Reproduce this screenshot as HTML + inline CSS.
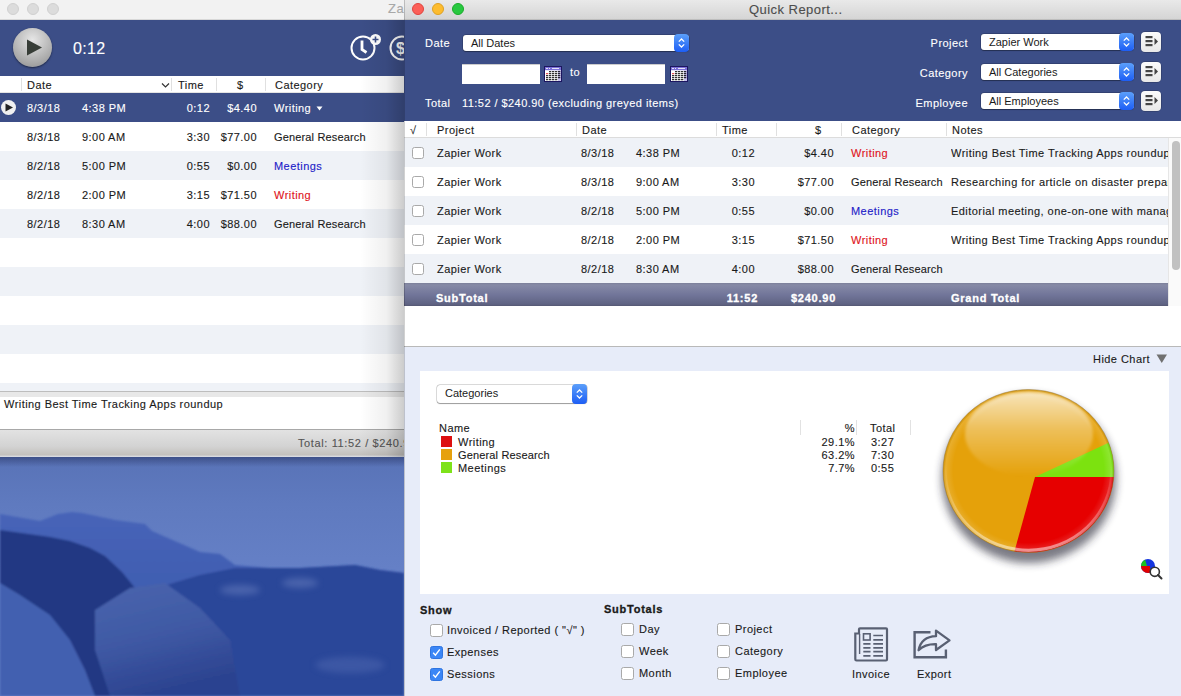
<!DOCTYPE html>
<html><head><meta charset="utf-8">
<style>
*{margin:0;padding:0;box-sizing:border-box}
html,body{width:1181px;height:696px;overflow:hidden;background:#3f5aa8}
body{position:relative;font-family:"Liberation Sans",sans-serif;font-size:11px;color:#1a1a1a}
.a{position:absolute}
.t{position:absolute;white-space:pre;line-height:14px;font-size:11px;letter-spacing:.45px;-webkit-text-stroke:.12px currentColor}
#desk{position:absolute;left:0;top:440px;width:404px;height:256px}
#lw{position:absolute;left:0;top:0;width:404px;height:457px;overflow:hidden;background:#fff}
#rw{position:absolute;left:404px;top:0;width:777px;height:696px;overflow:hidden;background:#fff}
.tl{position:absolute;top:3px;width:12px;height:12px;border-radius:50%}
.hdr{background:#3c4e87}
.wt{color:#fff}
.row{position:absolute;left:0;height:29px}
.alt{background:#eff2f7}
.cb{position:absolute;width:12px;height:12px;border:1px solid #a9a9a9;border-radius:2.5px;background:#fff}
.red{color:#e0131b}
.blue{color:#1c21c8}
.b{font-weight:bold;letter-spacing:.75px!important;-webkit-text-stroke:.3px currentColor!important}
.vd{position:absolute;top:123px;width:1px;height:13px;background:#e0e0e0}
.pop{background:#fff;border-radius:3px;box-shadow:0 0 0 .5px rgba(0,0,0,.25),0 .5px 1px rgba(0,0,0,.3)}
.pop span{position:absolute;left:8px;top:1px;line-height:14px;white-space:pre}
.pop i{position:absolute;right:0;top:-1px;bottom:-1px;width:15px;border-radius:4px;background:linear-gradient(#5b9ffa,#1d5ef5)}
.fld{background:#fff;box-shadow:inset 0 1px 0 #ccc}
.cal{width:18px;height:16px;background:#fff}
.sbtn{width:20px;height:20px;border-radius:4px;background:linear-gradient(#fbfbfb,#e8e8e8);box-shadow:0 0 0 .5px rgba(0,0,0,.3)}
.chk{background:#3b86f6!important;border-color:#2f74e0!important}
</style></head><body>

<!-- desktop -->
<svg id="desk" width="404" height="256" viewBox="0 440 404 256">
 <defs>
  <linearGradient id="sky" x1="0" y1="0" x2="0" y2="1">
   <stop offset="0" stop-color="#5670b4"/><stop offset=".25" stop-color="#5f7abf"/><stop offset=".5" stop-color="#6580c6"/><stop offset="1" stop-color="#6883ca"/>
  </linearGradient>
  <linearGradient id="far" x1="0" y1="0" x2="0" y2="1">
   <stop offset="0" stop-color="#4764b8"/><stop offset="1" stop-color="#3754a8"/>
  </linearGradient>
  <linearGradient id="rock" x1="0" y1="0" x2=".3" y2="1"><stop offset="0" stop-color="#4a65ae"/><stop offset=".55" stop-color="#3f59a4"/><stop offset="1" stop-color="#2c4390"/></linearGradient>
  <filter id="bl"><feGaussianBlur stdDeviation="0.8"/></filter>
  <filter id="bl2"><feGaussianBlur stdDeviation="3"/></filter>
 </defs>
 <rect x="0" y="440" width="404" height="256" fill="url(#sky)"/>
 <g filter="url(#bl)">
 <path d="M0 514 L40 521 L58 514 L72 512 L82 513 L115 520 L145 524 L152 531 L200 552 L220 554 L235 565 L270 568 L300 568 L355 565 L380 570 L404 573 L404 696 L0 696Z" fill="url(#far)"/>
 <path d="M150 590 L200 575 L235 568 L270 568 L300 568 L355 565 L380 570 L404 573 L404 696 L150 696Z" fill="#2b4699"/>
 <path d="M0 530 L50 537 L70 541 L90 548 L105 556 L122 572 L135 588 L160 630 L190 696 L0 696Z" fill="#213883"/>
 <path d="M95 610 L130 588 L165 583 L200 608 L230 640 L240 696 L110 696 L95 650Z" fill="url(#rock)"/>
 <path d="M0 583 L20 595 L50 615 L70 640 L85 670 L95 696 L0 696Z" fill="#4361b0"/>
 </g>
 <g filter="url(#bl2)" opacity=".5">
  <ellipse cx="240" cy="590" rx="20" ry="5" fill="#6a80c0"/>
  <ellipse cx="300" cy="583" rx="18" ry="5" fill="#6a80c0"/>
  <ellipse cx="350" cy="665" rx="35" ry="8" fill="#5068b0"/>
  
 </g>
</svg>


<div class="a" style="left:0;top:457px;width:404px;height:10px;background:linear-gradient(rgba(0,0,30,.3),rgba(0,0,30,0))"></div>
<!-- LEFT WINDOW -->
<div id="lw">
 <div class="a" style="left:0;top:0;width:404px;height:20px;background:#f2f2f2;border-bottom:1px solid #d8d8d8"></div>
 <div class="tl" style="left:7px;background:#dcdcdc;border:1px solid #d0d0d0"></div>
 <div class="tl" style="left:27px;background:#dcdcdc;border:1px solid #d0d0d0"></div>
 <div class="tl" style="left:47px;background:#dcdcdc;border:1px solid #d0d0d0"></div>
 <div class="t" style="left:388px;top:2px;font-size:13px;color:#a8a8a8">Zap</div>

 <div class="a hdr" style="left:0;top:20px;width:404px;height:56px"></div>
 <!-- play button -->
 <div class="a" style="left:13px;top:28px;width:39px;height:39px;border-radius:50%;background:radial-gradient(circle at 50% 30%,#e6e6e6,#a8a8a8 70%,#8a8a8a);box-shadow:0 1px 2px rgba(0,0,0,.5)"></div>
 <svg class="a" style="left:26px;top:38px" width="18" height="19"><path d="M1 1.5 L16 9.5 L1 17.5Z" fill="#373d37"/></svg>
 <div class="t wt" style="left:73px;top:41px;font-size:16px;line-height:16px;letter-spacing:.3px">0:12</div>
 <!-- clock icon -->
 <svg class="a" style="left:345px;top:30px" width="60" height="36">
  <circle cx="18" cy="18" r="11.5" fill="none" stroke="#fff" stroke-width="2"/>
  <path d="M17 10.5 V19.5 L21.5 22.5" fill="none" stroke="#fff" stroke-width="2.8"/>
  <circle cx="30.5" cy="9.5" r="5.5" fill="#fff"/>
  <path d="M30.5 6.5 V12.5 M27.5 9.5 H33.5" stroke="#3c4e87" stroke-width="1.6"/>
  <circle cx="57" cy="18" r="11.5" fill="none" stroke="#fff" stroke-width="2"/>
  <text x="51" y="24" font-family="Liberation Sans" font-weight="bold" font-size="16" fill="#fff">$</text>
 </svg>

 <!-- table header -->
 <div class="a" style="left:0;top:76px;width:404px;height:17px;background:#fff;border-bottom:1px solid #e4e4e4"></div>
 <div class="a" style="left:21px;top:78px;width:1px;height:13px;background:#e0e0e0"></div>
 <div class="a" style="left:171px;top:78px;width:1px;height:13px;background:#e0e0e0"></div>
 <div class="a" style="left:216px;top:78px;width:1px;height:13px;background:#e0e0e0"></div>
 <div class="a" style="left:265px;top:78px;width:1px;height:13px;background:#e0e0e0"></div>
 <div class="t" style="left:27px;top:78px">Date</div>
 <svg class="a" style="left:161px;top:82px" width="9" height="7"><path d="M1 1.5 L4.5 5 L8 1.5" fill="none" stroke="#333" stroke-width="1.2"/></svg>
 <div class="t" style="left:178px;top:78px">Time</div>
 <div class="t" style="left:237px;top:78px">$</div>
 <div class="t" style="left:275px;top:78px">Category</div>

 <!-- rows -->
 <div class="row hdr" style="top:93px;width:404px"></div>
 <div class="row" style="top:122px;width:404px;background:#fff"></div>
 <div class="row alt" style="top:151px;width:404px"></div>
 <div class="row" style="top:180px;width:404px;background:#fff"></div>
 <div class="row alt" style="top:209px;width:404px"></div>
 <div class="row" style="top:238px;width:404px;background:#fff"></div>
 <div class="row alt" style="top:267px;width:404px"></div>
 <div class="row" style="top:296px;width:404px;background:#fff"></div>
 <div class="row alt" style="top:325px;width:404px"></div>
 <div class="row" style="top:354px;width:404px;background:#fff"></div>
 <div class="row alt" style="top:383px;width:404px;height:8px"></div>

 <!-- row play -->
 <div class="a" style="left:1px;top:100px;width:15px;height:15px;border-radius:50%;background:#f0f0f0"></div>
 <svg class="a" style="left:5px;top:103px" width="9" height="9"><path d="M0.5 0.5 L8 4.5 L0.5 8.5Z" fill="#222"/></svg>

 <div class="t wt" style="left:27px;top:101px">8/3/18</div>
 <div class="t wt" style="left:82px;top:101px">4:38 PM</div>
 <div class="t wt" style="right:194px;top:101px">0:12</div>
 <div class="t wt" style="right:147px;top:101px">$4.40</div>
 <div class="t wt" style="left:274px;top:101px">Writing</div><svg class="a" style="left:316px;top:106px" width="7" height="5"><path d="M0.5 0.5 H6.5 L3.5 4.5Z" fill="#fff"/></svg>
 <div class="t" style="left:27px;top:130px">8/3/18</div>
 <div class="t" style="left:82px;top:130px">9:00 AM</div>
 <div class="t" style="right:194px;top:130px">3:30</div>
 <div class="t" style="right:147px;top:130px">$77.00</div>
 <div class="t" style="left:274px;top:130px;letter-spacing:.15px">General Research</div>
 <div class="t" style="left:27px;top:159px">8/2/18</div>
 <div class="t" style="left:82px;top:159px">5:00 PM</div>
 <div class="t" style="right:194px;top:159px">0:55</div>
 <div class="t" style="right:147px;top:159px">$0.00</div>
 <div class="t blue" style="left:274px;top:159px">Meetings</div>
 <div class="t" style="left:27px;top:188px">8/2/18</div>
 <div class="t" style="left:82px;top:188px">2:00 PM</div>
 <div class="t" style="right:194px;top:188px">3:15</div>
 <div class="t" style="right:147px;top:188px">$71.50</div>
 <div class="t red" style="left:274px;top:188px">Writing</div>
 <div class="t" style="left:27px;top:217px">8/2/18</div>
 <div class="t" style="left:82px;top:217px">8:30 AM</div>
 <div class="t" style="right:194px;top:217px">4:00</div>
 <div class="t" style="right:147px;top:217px">$88.00</div>
 <div class="t" style="left:274px;top:217px;letter-spacing:.15px">General Research</div>

 <!-- notes -->
 <div class="a" style="left:0;top:391px;width:404px;height:1px;background:#bdbdbd"></div>
 <div class="a" style="left:0;top:392px;width:404px;height:5px;background:#e8e8e8"></div>
 <div class="a" style="left:0;top:397px;width:404px;height:32px;background:#fff"></div>
 <div class="t" style="left:4px;top:397px">Writing Best Time Tracking Apps roundup</div>
 <div class="a" style="left:0;top:429px;width:404px;height:1px;background:#a8a8a8"></div>
 <div class="a" style="left:0;top:430px;width:404px;height:27px;background:linear-gradient(#e2e2e2,#d3d3d3 60%,#c4c1bd 92%,#dfe2ea)"></div>
 <div class="t" style="left:298px;top:436px;color:#555;letter-spacing:.62px">Total: 11:52 / $240.90</div>
 <!-- shadow from right window -->
 <div class="a" style="left:360px;top:20px;width:44px;height:437px;background:linear-gradient(90deg,rgba(0,0,0,0),rgba(0,0,0,.06) 60%,rgba(0,0,0,.2))"></div>
</div>

<!-- RIGHT WINDOW -->
<div id="rw">
 <div class="a" style="left:0;top:0;width:777px;height:20px;background:linear-gradient(#e9e9e9,#d5d5d5);border-bottom:1px solid #bdbdbd"></div>
 <div class="tl" style="left:8px;top:2.5px;background:#fc5f57;border:1px solid #e0443e"></div>
 <div class="tl" style="left:28px;top:2.5px;background:#fdbc2e;border:1px solid #dea123"></div>
 <div class="tl" style="left:48px;top:2.5px;background:#28c840;border:1px solid #1aab29"></div>
 <div class="t" style="left:345px;top:2px;font-size:13px;line-height:15px;color:#4d4d4d">Quick Report...</div>

 <div class="a hdr" style="left:0;top:20px;width:777px;height:101px"></div>
 <div class="t wt" style="left:21px;top:36px">Date</div>
 <div class="a pop" style="left:59px;top:35px;width:226px;height:16px"><span>All Dates</span><i><svg width="15" height="16" viewBox="0 0 15 16" style="position:absolute;left:0;top:50%;margin-top:-8px"><path d="M4.8 6.6 L7.5 4 L10.2 6.6 M4.8 9.4 L7.5 12 L10.2 9.4" fill="none" stroke="#fff" stroke-width="1.3"/></svg></i></div>
 <div class="a fld" style="left:58px;top:64px;width:78px;height:20px"></div>
 <div class="a cal" style="left:140px;top:66px"><svg width="18" height="16" viewBox="0 0 18 16"><rect x="0.5" y="0.5" width="17" height="15" fill="#fff" stroke="#1c1660"/><rect x="1" y="1" width="16" height="3.2" fill="#7b6fd8"/><path d="M2 2.5 H4 M5 2.5 H6 M8 2.5 H15" stroke="#fff" stroke-width=".8"/><rect x="14" y="4.2" width="3" height="10.8" fill="#c8c0f0"/><rect x="5" y="5.2" width="2.3" height="1" fill="#000"/><rect x="8" y="5.2" width="2.3" height="1" fill="#000"/><rect x="11" y="5.2" width="2.3" height="1" fill="#000"/><rect x="14" y="5.2" width="2.3" height="1" fill="#000"/><rect x="2" y="7.2" width="2.3" height="1" fill="#e03030"/><rect x="5" y="7.2" width="2.3" height="1" fill="#000"/><rect x="8" y="7.2" width="2.3" height="1" fill="#000"/><rect x="11" y="7.2" width="2.3" height="1" fill="#000"/><rect x="14" y="7.2" width="2.3" height="1" fill="#000"/><rect x="2" y="9.2" width="2.3" height="1" fill="#000"/><rect x="5" y="9.2" width="2.3" height="1" fill="#000"/><rect x="8" y="9.2" width="2.3" height="1" fill="#000"/><rect x="11" y="9.2" width="2.3" height="1" fill="#000"/><rect x="14" y="9.2" width="2.3" height="1" fill="#000"/><rect x="2" y="11.2" width="2.3" height="1" fill="#000"/><rect x="5" y="11.2" width="2.3" height="1" fill="#000"/><rect x="8" y="11.2" width="2.3" height="1" fill="#000"/><rect x="11" y="11.2" width="2.3" height="1" fill="#000"/><rect x="14" y="11.2" width="2.3" height="1" fill="#000"/><rect x="2" y="13.2" width="2.3" height="1" fill="#000"/><rect x="5" y="13.2" width="2.3" height="1" fill="#000"/><rect x="8" y="13.2" width="2.3" height="1" fill="#000"/><rect x="11" y="13.2" width="2.3" height="1" fill="#000"/></svg></div>
 <div class="t wt" style="left:166px;top:65px">to</div>
 <div class="a fld" style="left:183px;top:64px;width:78px;height:20px"></div>
 <div class="a cal" style="left:266px;top:66px"><svg width="18" height="16" viewBox="0 0 18 16"><rect x="0.5" y="0.5" width="17" height="15" fill="#fff" stroke="#1c1660"/><rect x="1" y="1" width="16" height="3.2" fill="#7b6fd8"/><path d="M2 2.5 H4 M5 2.5 H6 M8 2.5 H15" stroke="#fff" stroke-width=".8"/><rect x="14" y="4.2" width="3" height="10.8" fill="#c8c0f0"/><rect x="5" y="5.2" width="2.3" height="1" fill="#000"/><rect x="8" y="5.2" width="2.3" height="1" fill="#000"/><rect x="11" y="5.2" width="2.3" height="1" fill="#000"/><rect x="14" y="5.2" width="2.3" height="1" fill="#000"/><rect x="2" y="7.2" width="2.3" height="1" fill="#e03030"/><rect x="5" y="7.2" width="2.3" height="1" fill="#000"/><rect x="8" y="7.2" width="2.3" height="1" fill="#000"/><rect x="11" y="7.2" width="2.3" height="1" fill="#000"/><rect x="14" y="7.2" width="2.3" height="1" fill="#000"/><rect x="2" y="9.2" width="2.3" height="1" fill="#000"/><rect x="5" y="9.2" width="2.3" height="1" fill="#000"/><rect x="8" y="9.2" width="2.3" height="1" fill="#000"/><rect x="11" y="9.2" width="2.3" height="1" fill="#000"/><rect x="14" y="9.2" width="2.3" height="1" fill="#000"/><rect x="2" y="11.2" width="2.3" height="1" fill="#000"/><rect x="5" y="11.2" width="2.3" height="1" fill="#000"/><rect x="8" y="11.2" width="2.3" height="1" fill="#000"/><rect x="11" y="11.2" width="2.3" height="1" fill="#000"/><rect x="14" y="11.2" width="2.3" height="1" fill="#000"/><rect x="2" y="13.2" width="2.3" height="1" fill="#000"/><rect x="5" y="13.2" width="2.3" height="1" fill="#000"/><rect x="8" y="13.2" width="2.3" height="1" fill="#000"/><rect x="11" y="13.2" width="2.3" height="1" fill="#000"/></svg></div>
 <div class="t wt" style="left:21px;top:96px">Total</div>
 <div class="t wt" style="left:58px;top:96px">11:52 / $240.90 (excluding greyed items)</div>

 <div class="t wt" style="right:213px;top:36px">Project</div>
 <div class="t wt" style="right:213px;top:66px">Category</div>
 <div class="t wt" style="right:213px;top:96px">Employee</div>
 <div class="a pop" style="left:577px;top:34px;width:153px;height:16px"><span>Zapier Work</span><i><svg width="15" height="16" viewBox="0 0 15 16" style="position:absolute;left:0;top:50%;margin-top:-8px"><path d="M4.8 6.6 L7.5 4 L10.2 6.6 M4.8 9.4 L7.5 12 L10.2 9.4" fill="none" stroke="#fff" stroke-width="1.3"/></svg></i></div>
 <div class="a pop" style="left:577px;top:64px;width:153px;height:16px"><span>All Categories</span><i><svg width="15" height="16" viewBox="0 0 15 16" style="position:absolute;left:0;top:50%;margin-top:-8px"><path d="M4.8 6.6 L7.5 4 L10.2 6.6 M4.8 9.4 L7.5 12 L10.2 9.4" fill="none" stroke="#fff" stroke-width="1.3"/></svg></i></div>
 <div class="a pop" style="left:577px;top:93px;width:153px;height:16px"><span>All Employees</span><i><svg width="15" height="16" viewBox="0 0 15 16" style="position:absolute;left:0;top:50%;margin-top:-8px"><path d="M4.8 6.6 L7.5 4 L10.2 6.6 M4.8 9.4 L7.5 12 L10.2 9.4" fill="none" stroke="#fff" stroke-width="1.3"/></svg></i></div>
 <div class="a sbtn" style="left:737px;top:32px"><svg width="20" height="20" viewBox="0 0 20 20"><rect x="4.5" y="4" width="7" height="2.2" fill="#444"/><rect x="4.5" y="8" width="7" height="2.2" fill="#444"/><rect x="4.5" y="12" width="7" height="2.2" fill="#444"/><path d="M13.5 6 L17 9.5 L13.5 13Z" fill="#444"/></svg></div>
 <div class="a sbtn" style="left:737px;top:62px"><svg width="20" height="20" viewBox="0 0 20 20"><rect x="4.5" y="4" width="7" height="2.2" fill="#444"/><rect x="4.5" y="8" width="7" height="2.2" fill="#444"/><rect x="4.5" y="12" width="7" height="2.2" fill="#444"/><path d="M13.5 6 L17 9.5 L13.5 13Z" fill="#444"/></svg></div>
 <div class="a sbtn" style="left:737px;top:91px"><svg width="20" height="20" viewBox="0 0 20 20"><rect x="4.5" y="4" width="7" height="2.2" fill="#444"/><rect x="4.5" y="8" width="7" height="2.2" fill="#444"/><rect x="4.5" y="12" width="7" height="2.2" fill="#444"/><path d="M13.5 6 L17 9.5 L13.5 13Z" fill="#444"/></svg></div>

 <!-- table header -->
 <div class="a" style="left:0;top:121px;width:777px;height:17px;background:#fff;border-bottom:1px solid #dcdcdc"></div>
 <div class="t" style="left:6px;top:123px">√</div>
 <div class="a vd" style="left:22px"></div>
 <div class="t" style="left:33px;top:123px">Project</div>
 <div class="a vd" style="left:172px"></div>
 <div class="t" style="left:178px;top:123px">Date</div>
 <div class="a vd" style="left:312px"></div>
 <div class="t" style="left:318px;top:123px">Time</div>
 <div class="a vd" style="left:372px"></div>
 <div class="t" style="left:411px;top:123px">$</div>
 <div class="a vd" style="left:437px"></div>
 <div class="t" style="left:448px;top:123px">Category</div>
 <div class="a vd" style="left:542px"></div>
 <div class="t" style="left:548px;top:123px">Notes</div>

 <div class="row alt" style="top:138px;width:777px"></div>
 <div class="row" style="top:167px;width:777px;background:#fff"></div>
 <div class="row alt" style="top:196px;width:777px"></div>
 <div class="row" style="top:225px;width:777px;background:#fff"></div>
 <div class="row alt" style="top:254px;width:777px"></div>
 <div class="cb" style="left:8px;top:147px"></div>
 <div class="t" style="left:33px;top:146px">Zapier Work</div>
 <div class="t" style="left:177px;top:146px">8/3/18</div>
 <div class="t" style="left:232px;top:146px">4:38 PM</div>
 <div class="t" style="right:426px;top:146px">0:12</div>
 <div class="t" style="right:347px;top:146px">$4.40</div>
 <div class="t red" style="left:447px;top:146px">Writing</div>
 <div class="t" style="left:547px;top:146px;width:221px;overflow:hidden">Writing Best Time Tracking Apps roundup</div>
 <div class="cb" style="left:8px;top:176px"></div>
 <div class="t" style="left:33px;top:175px">Zapier Work</div>
 <div class="t" style="left:177px;top:175px">8/3/18</div>
 <div class="t" style="left:232px;top:175px">9:00 AM</div>
 <div class="t" style="right:426px;top:175px">3:30</div>
 <div class="t" style="right:347px;top:175px">$77.00</div>
 <div class="t" style="left:447px;top:175px;letter-spacing:.15px">General Research</div>
 <div class="t" style="left:547px;top:175px;width:221px;overflow:hidden">Researching for article on disaster preparedness</div>
 <div class="cb" style="left:8px;top:205px"></div>
 <div class="t" style="left:33px;top:204px">Zapier Work</div>
 <div class="t" style="left:177px;top:204px">8/2/18</div>
 <div class="t" style="left:232px;top:204px">5:00 PM</div>
 <div class="t" style="right:426px;top:204px">0:55</div>
 <div class="t" style="right:347px;top:204px">$0.00</div>
 <div class="t blue" style="left:447px;top:204px">Meetings</div>
 <div class="t" style="left:547px;top:204px;width:221px;overflow:hidden">Editorial meeting, one-on-one with manager</div>
 <div class="cb" style="left:8px;top:234px"></div>
 <div class="t" style="left:33px;top:233px">Zapier Work</div>
 <div class="t" style="left:177px;top:233px">8/2/18</div>
 <div class="t" style="left:232px;top:233px">2:00 PM</div>
 <div class="t" style="right:426px;top:233px">3:15</div>
 <div class="t" style="right:347px;top:233px">$71.50</div>
 <div class="t red" style="left:447px;top:233px">Writing</div>
 <div class="t" style="left:547px;top:233px;width:221px;overflow:hidden">Writing Best Time Tracking Apps roundup</div>
 <div class="cb" style="left:8px;top:263px"></div>
 <div class="t" style="left:33px;top:262px">Zapier Work</div>
 <div class="t" style="left:177px;top:262px">8/2/18</div>
 <div class="t" style="left:232px;top:262px">8:30 AM</div>
 <div class="t" style="right:426px;top:262px">4:00</div>
 <div class="t" style="right:347px;top:262px">$88.00</div>
 <div class="t" style="left:447px;top:262px;letter-spacing:.15px">General Research</div>
 <div class="a" style="left:0;top:283px;width:777px;height:23px;background:linear-gradient(#7c809a,#868aa6 2px,#72769a 50%,#5f6383 92%,#555873)"></div>
 <div class="t wt b" style="left:32px;top:291px">SubTotal</div>
 <div class="t wt b" style="right:423px;top:291px">11:52</div>
 <div class="t wt b" style="right:345px;top:291px">$240.90</div>
 <div class="t wt b" style="left:547px;top:291px">Grand Total</div>
 <!-- scrollbar -->
 <div class="a" style="left:764px;top:138px;width:13px;height:168px;background:#fafafa;border-left:1px solid #e6e6e6"></div>
 <div class="a" style="left:768px;top:141px;width:8px;height:129px;border-radius:4px;background:#c1c1c1"></div>

 <div class="a" style="left:0;top:306px;width:777px;height:40px;background:#fff"></div>
 <div class="a" style="left:0;top:346px;width:777px;height:1px;background:#b9b9b9"></div>

 <!-- chart area -->
 <div class="a" style="left:0;top:347px;width:777px;height:349px;background:#e7ecf9"></div>
 <div class="t" style="left:689px;top:352px">Hide Chart</div>
 <svg class="a" style="left:752px;top:354px" width="12" height="10"><path d="M0.5 0.5 H11 L5.75 9Z" fill="#707070"/></svg>
 <div class="a" style="left:16px;top:371px;width:749px;height:223px;background:#fff"></div>
 <div class="a pop" style="left:33px;top:385px;width:150px;height:18px"><span>Categories</span><i><svg width="15" height="16" viewBox="0 0 15 16" style="position:absolute;left:0;top:50%;margin-top:-8px"><path d="M4.8 6.6 L7.5 4 L10.2 6.6 M4.8 9.4 L7.5 12 L10.2 9.4" fill="none" stroke="#fff" stroke-width="1.3"/></svg></i></div>
 <div class="t" style="left:35px;top:421px">Name</div>
 <div class="a" style="left:37px;top:436px;width:11px;height:11px;background:#dd1010"></div>
 <div class="a" style="left:37px;top:449px;width:11px;height:11px;background:#e6a10e"></div>
 <div class="a" style="left:37px;top:462px;width:11px;height:11px;background:#7ee21a"></div>
 <div class="t" style="left:54px;top:435px">Writing</div>
 <div class="t" style="left:54px;top:448px;letter-spacing:.15px">General Research</div>
 <div class="t" style="left:54px;top:461px">Meetings</div>
 <div class="a" style="left:396px;top:420px;width:1px;height:15px;background:#e2e2e2"></div>
 <div class="a" style="left:452px;top:420px;width:1px;height:15px;background:#e2e2e2"></div>
 <div class="a" style="left:506px;top:420px;width:1px;height:15px;background:#e2e2e2"></div>
 <div class="t" style="right:326px;top:421px">%</div>
 <div class="t" style="right:326px;top:435px">29.1%</div>
 <div class="t" style="right:326px;top:448px">63.2%</div>
 <div class="t" style="right:326px;top:461px">7.7%</div>
 <div class="t" style="left:466px;top:421px">Total</div>
 <div class="t" style="left:467px;top:435px">3:27</div>
 <div class="t" style="left:467px;top:448px">7:30</div>
 <div class="t" style="left:467px;top:461px">0:55</div>
  <svg class="a" style="left:520px;top:372px" width="248" height="221" viewBox="924 372 248 221">
  <defs>
   <clipPath id="pc"><ellipse cx="1028.5" cy="471" rx="85.5" ry="81.5"/></clipPath>
   <filter id="sh" x="-30%" y="-30%" width="160%" height="160%"><feGaussianBlur stdDeviation="4"/></filter>
   <linearGradient id="gl" x1="0" y1="0" x2="0" y2="1">
    <stop offset="0" stop-color="#fff" stop-opacity=".72"/>
    <stop offset=".45" stop-color="#fff" stop-opacity=".32"/>
    <stop offset="1" stop-color="#fff" stop-opacity="0"/>
   </linearGradient>
   <linearGradient id="rimg" x1="0" y1="0" x2="0" y2="1"><stop offset=".45" stop-color="#fff" stop-opacity="0"/><stop offset=".8" stop-color="#fff" stop-opacity=".3"/><stop offset="1" stop-color="#fff" stop-opacity=".5"/></linearGradient>
   <filter id="gb"><feGaussianBlur stdDeviation="1.5"/></filter>
   <radialGradient id="rim" cx="0.5" cy="0.5" r="0.5">
    <stop offset=".88" stop-color="#fff" stop-opacity="0"/>
    <stop offset=".97" stop-color="#fff" stop-opacity=".28"/>
    <stop offset="1" stop-color="#000" stop-opacity=".15"/>
   </radialGradient>
  </defs>
  <ellipse cx="1029" cy="479" rx="87" ry="84" fill="#202030" opacity=".6" filter="url(#sh)"/>
  <g clip-path="url(#pc)">
   <rect x="924" y="372" width="248" height="221" fill="#e5a10a"/>
   <path d="M1035 477 L1200 477 L1200 400 L1035 477Z" fill="#7ce20f"/>
   <path d="M1035 477 L1200 477 L1200 600 L1001 600 Z" fill="#e60000"/>
   <ellipse cx="1029" cy="434" rx="64" ry="42" fill="url(#gl)" filter="url(#gb)"/>
   <ellipse cx="1028.5" cy="471" rx="85.5" ry="81.5" fill="url(#rim)" opacity=".5"/>
   <ellipse cx="1028.5" cy="471" rx="83.3" ry="79.3" fill="none" stroke="url(#rimg)" stroke-width="3.2"/>
  </g>
  <ellipse cx="1028.5" cy="471" rx="85.5" ry="81.5" fill="none" stroke="#8a7040" stroke-opacity=".45" stroke-width="1"/>
  <!-- small icon -->
  <g>
   <clipPath id="ic"><circle cx="1148" cy="566" r="7"/></clipPath>
   <g clip-path="url(#ic)">
    <rect x="1140" y="558" width="16" height="16" fill="#1435e0"/>
    <path d="M1147 566 L1140 566 L1140 556 L1144 556Z" fill="#1dc21d"/>
    <path d="M1147 566 L1140 566 L1140 576 L1150 576 L1150 566Z" fill="#e00000"/>
   </g>
   <circle cx="1154.8" cy="571.8" r="4.6" fill="#fff" stroke="#333" stroke-width="1.6"/>
   <path d="M1158 575 L1161.5 578.5" stroke="#333" stroke-width="2" stroke-linecap="round"/>
  </g>
 </svg>


 <!-- show section -->
 <div class="t b" style="left:16px;top:603px">Show</div>
 <div class="cb" style="left:26px;top:624px;width:13px;height:13px"></div>
 <div class="t" style="left:43px;top:623px">Invoiced / Reported ( "√" )</div>
 <div class="cb chk" style="left:26px;top:646px;width:13px;height:13px"><svg width="13" height="13" viewBox="0 0 13 13" style="position:absolute;left:-1px;top:-1px"><path d="M3.2 6.8 L5.4 9.2 L9.8 3.4" fill="none" stroke="#fff" stroke-width="1.4"/></svg></div>
 <div class="t" style="left:43px;top:645px">Expenses</div>
 <div class="cb chk" style="left:26px;top:668px;width:13px;height:13px"><svg width="13" height="13" viewBox="0 0 13 13" style="position:absolute;left:-1px;top:-1px"><path d="M3.2 6.8 L5.4 9.2 L9.8 3.4" fill="none" stroke="#fff" stroke-width="1.4"/></svg></div>
 <div class="t" style="left:43px;top:667px">Sessions</div>

 <div class="t b" style="left:200px;top:602px">SubTotals</div>
 <div class="cb" style="left:217px;top:623px;width:13px;height:13px"></div>
 <div class="t" style="left:235px;top:622px">Day</div>
 <div class="cb" style="left:217px;top:645px;width:13px;height:13px"></div>
 <div class="t" style="left:235px;top:644px">Week</div>
 <div class="cb" style="left:217px;top:667px;width:13px;height:13px"></div>
 <div class="t" style="left:235px;top:666px">Month</div>
 <div class="cb" style="left:313px;top:623px;width:13px;height:13px"></div>
 <div class="t" style="left:331px;top:622px">Project</div>
 <div class="cb" style="left:313px;top:645px;width:13px;height:13px"></div>
 <div class="t" style="left:331px;top:644px">Category</div>
 <div class="cb" style="left:313px;top:667px;width:13px;height:13px"></div>
 <div class="t" style="left:331px;top:666px">Employee</div>
 <svg class="a" style="left:445px;top:622px" width="50" height="44" viewBox="849 622 50 44">
  <path d="M859 634.5 V629.3 Q859 628.3 860 628.3 H886 Q887 628.3 887 629.3 V659.5 Q887 660.5 886 660.5 H856.5 Q855.3 660.5 855.3 659.3 V633.5 H859" fill="none" stroke="#596073" stroke-width="2.2"/>
  <path d="M859.6 634 V654" stroke="#596073" stroke-width="1.4"/>
  <rect x="863.5" y="633.8" width="6.6" height="6.2" fill="none" stroke="#596073" stroke-width="1.6"/>
  <path d="M873.3 635.5 H883 M873.3 639.8 H883 M863.3 643.9 H870.5 M873.3 643.9 H883 M863.3 647.8 H870.5 M873.3 647.8 H883 M863.3 651.7 H870.5 M873.3 651.7 H883 M863.3 655.8 H870.5 M873.3 655.8 H883" stroke="#596073" stroke-width="1.7"/>
 </svg>
 <svg class="a" style="left:505px;top:622px" width="50" height="44" viewBox="909 622 50 44">
  <path d="M930.5 632.2 H914.6 V657.3 H945.9 V649.5" fill="none" stroke="#596073" stroke-width="2.4"/>
  <path d="M918.6 650.2 C920.5 641 927 636.5 936 636.2 V630.6 L949.5 640.4 L936 650 V644.2 C929 644 923 646 918.6 650.2Z" fill="none" stroke="#596073" stroke-width="2.3" stroke-linejoin="round"/>
 </svg>
 <div class="t" style="left:448px;top:667px">Invoice</div>
 <div class="t" style="left:513px;top:667px">Export</div>
 <!-- window left border -->
 <div class="a" style="left:0;top:0;width:1px;height:696px;background:rgba(0,0,0,.18)"></div>
</div>

</body></html>
